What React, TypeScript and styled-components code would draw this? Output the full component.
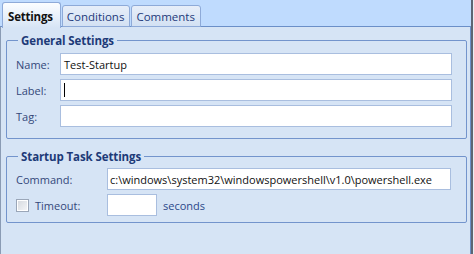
import styled, { createGlobalStyle } from "styled-components";

const GlobalStyle = createGlobalStyle`
  html, body {
    margin: 0;
    padding: 0;
    background: #e9eef5;
  }
  body {
    font-family: "Segoe UI", "Open Sans", "Noto Sans", sans-serif;
    font-size: 11px;
  }
`;

export default function App() {
  return (
    <>
      <GlobalStyle />
      <Window>
        <TabStrip>
          <Tab $active>Settings</Tab>
          <Tab>Conditions</Tab>
          <Tab>Comments</Tab>
        </TabStrip>
        <Panel>
          <Group>
            <Legend>General Settings</Legend>
            <FieldRow>
              <Label $width={44}>Name:</Label>
              <TextBox>Test-Startup</TextBox>
            </FieldRow>
            <FieldRow>
              <Label $width={44}>Label:</Label>
              <TextBox>
                <Caret />
              </TextBox>
            </FieldRow>
            <FieldRow>
              <Label $width={44}>Tag:</Label>
              <TextBox />
            </FieldRow>
          </Group>
          <Group $second>
            <Legend>Startup Task Settings</Legend>
            <FieldRow>
              <Label $width={91}>Command:</Label>
              <TextBox $tight>c:\windows\system32\windowspowershell\v1.0\powershell.exe</TextBox>
            </FieldRow>
            <FieldRow>
              <CheckLabel>
                <CheckBox />
                Timeout:
              </CheckLabel>
              <SmallBox />
              <Unit>seconds</Unit>
            </FieldRow>
          </Group>
        </Panel>
      </Window>
    </>
  );
}

const Window = styled.div`
  width: 471px;
  height: 254px;
  display: flex;
  flex-direction: column;
  border-right: 2px solid #5d6673;
  box-sizing: content-box;
`;

const TabStrip = styled.div`
  height: 27px;
  flex: none;
  background: #bfdbfe;
  display: flex;
  align-items: flex-end;
  padding-left: 2px;
  gap: 1px;
`;

const Tab = styled.div<{ $active?: boolean }>`
  position: relative;
  height: ${(p) => (p.$active ? "26px" : "22px")};
  margin-bottom: ${(p) => (p.$active ? "-1px" : "0")};
  padding: ${(p) => (p.$active ? "1px 7px 0 5px" : "0 5px 0 4px")};
  box-sizing: border-box;
  display: flex;
  align-items: center;
  border: 1px solid #8eaad8;
  border-bottom: ${(p) => (p.$active ? "none" : "1px solid #8eaad8")};
  border-radius: 3px 3px 0 0;
  background: ${(p) =>
    p.$active
      ? "linear-gradient(#fbfdff, #e6effa 60%, #d6e4f5)"
      : "linear-gradient(#e7eef9, #d3e1f3)"};
  color: ${(p) => (p.$active ? "#111" : "#1e3a7b")};
  font-weight: ${(p) => (p.$active ? 700 : 400)};
  font-size: 11.5px;
  letter-spacing: ${(p) => (p.$active ? "-0.2px" : "0")};
  z-index: ${(p) => (p.$active ? 2 : 1)};
`;

const Panel = styled.div`
  flex: 1;
  background: #d6e4f5;
  border-top: 1px solid #6b8fc8;
  border-left: 1px solid #8a9bb4;
  border-right: 1px solid #6b8fc8;
  padding: 6px 3px 0 5px;
  display: flex;
  flex-direction: column;
  margin-top: -1px;
`;

const Group = styled.fieldset<{ $second?: boolean }>`
  margin: ${(p) => (p.$second ? "10px 0 0 0" : "0")};
  border: 1px solid #7394cc;
  border-radius: 2px;
  padding: ${(p) => (p.$second ? "4px 15px 6px 9px" : "5px 14px 11px 9px")};
  display: flex;
  flex-direction: column;
  gap: 4px;
  min-width: 0;
`;

const Legend = styled.legend`
  padding: 0 3px;
  margin-left: 2px;
  font-weight: 700;
  font-size: 11.5px;
  letter-spacing: -0.1px;
  color: #1d3a78;
`;

const FieldRow = styled.div`
  display: flex;
  align-items: center;
  height: 22px;
`;

const Label = styled.span<{ $width: number }>`
  width: ${(p) => p.$width}px;
  flex: none;
  color: #34487a;
  font-size: 11px;
`;

const TextBox = styled.div<{ $tight?: boolean }>`
  flex: 1;
  height: 22px;
  box-sizing: border-box;
  background: #fff;
  border: 1px solid #a9bedf;
  display: flex;
  align-items: center;
  padding-left: ${(p) => (p.$tight ? "2px" : "3px")};
  color: #111;
  font-size: 11px;
  white-space: nowrap;
  overflow: hidden;
`;

const Caret = styled.span`
  width: 1px;
  height: 14px;
  background: #000;
`;

const CheckLabel = styled.label`
  width: 91px;
  flex: none;
  display: flex;
  align-items: center;
  gap: 6px;
  color: #34487a;
  font-size: 11px;
`;

const CheckBox = styled.span`
  width: 11px;
  height: 11px;
  border: 1px solid #9aa6b8;
  background: linear-gradient(135deg, #d4d8de, #f6f7f9);
  box-shadow: inset 0 0 0 1px #fff;
`;

const SmallBox = styled.div`
  width: 50px;
  height: 22px;
  box-sizing: border-box;
  background: #fff;
  border: 1px solid #a9bedf;
`;

const Unit = styled.span`
  margin-left: 6px;
  color: #2b4789;
  font-size: 11px;
`;
